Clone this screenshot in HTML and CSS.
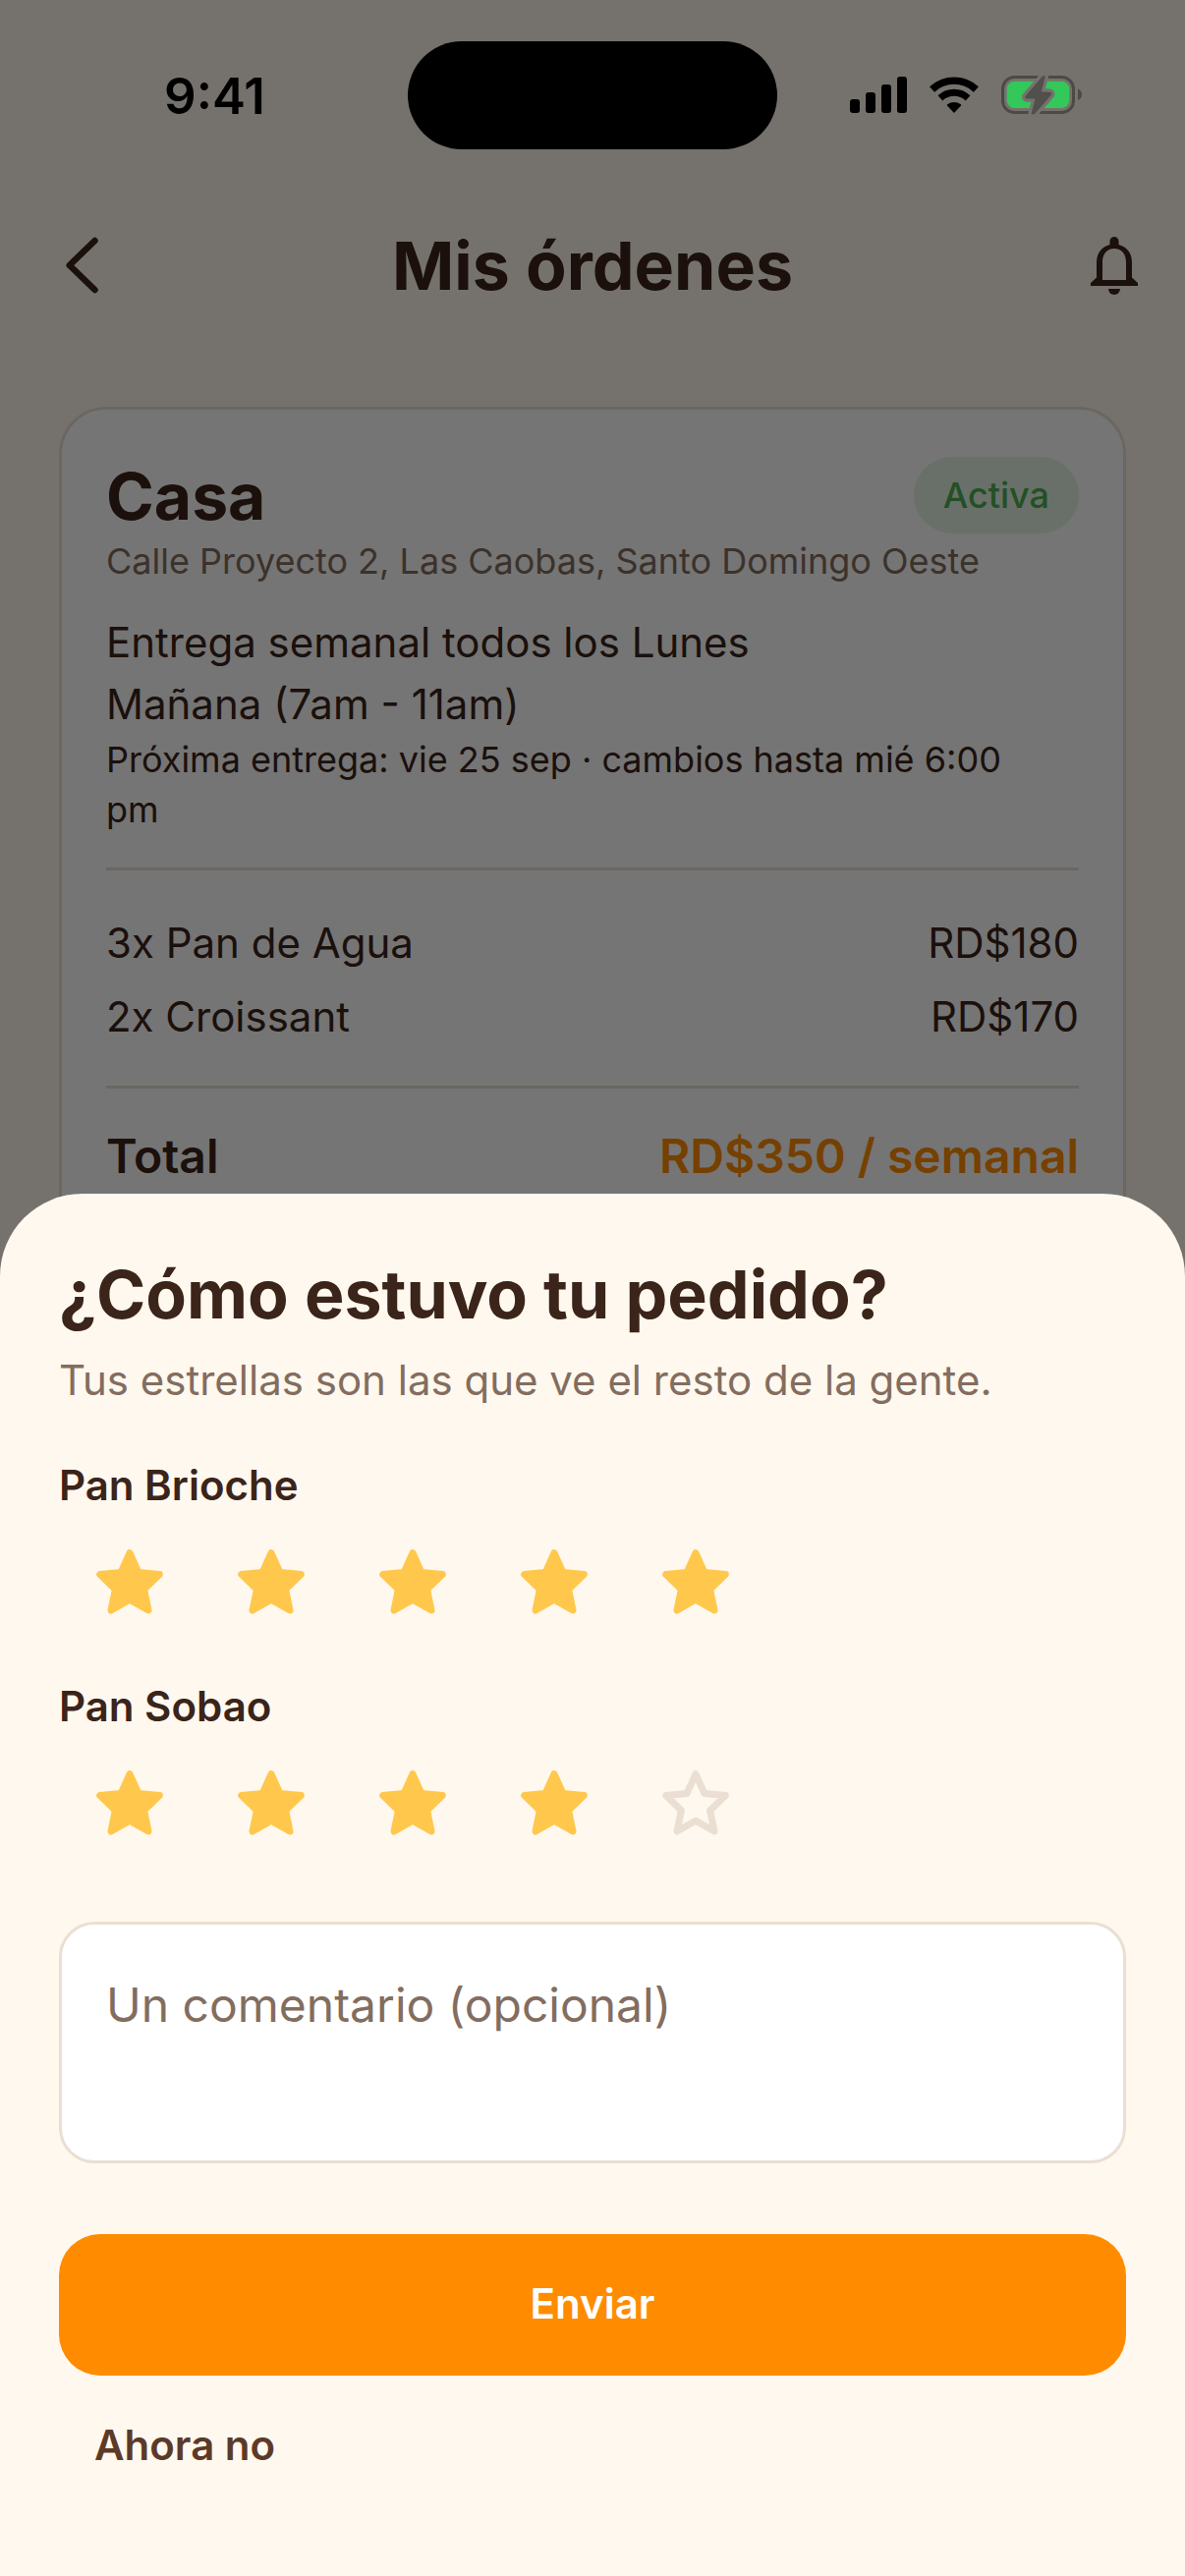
FILE: index.html
```html
<!DOCTYPE html>
<html lang="es">
<head>
    <meta charset="UTF-8">
    <meta name="viewport" content="width=device-width, initial-scale=1.0">
    <title>Mis órdenes</title>
    <link rel="stylesheet" href="styles.css">
</head>
<body>
    <!-- Shared icons -->
    <svg class="icon-defs" aria-hidden="true">
        <symbol id="star" viewBox="0 0 84 84">
            <path d="M42 8.6 51 28.6 72.3 30.6 56.6 45.7 61 67 42 56.2 23 67 27.4 45.7 11.7 30.6 33 28.6Z" stroke-width="7" stroke-linejoin="round"/>
        </symbol>
    </svg>

    <div class="status-bar">
        <div class="status-time">9:41</div>
        <div class="island"></div>
        <div class="status-icons">
            <svg width="58" height="40" viewBox="0 0 58 40">
                <rect x="0" y="24" width="10" height="14" rx="3"/>
                <rect x="16" y="17" width="10" height="21" rx="3"/>
                <rect x="32" y="9" width="10" height="29" rx="3"/>
                <rect x="48" y="1" width="10" height="37" rx="3"/>
            </svg>
            <svg width="50" height="40" viewBox="0 0 50 40">
                <path d="M2.6 14A32.8 32.8 0 0 1 47.4 14" fill="none" stroke="#000" stroke-width="7.4"/>
                <path d="M10.9 22.9A20.7 20.7 0 0 1 39.1 22.9" fill="none" stroke="#000" stroke-width="7"/>
                <path d="M25 38 18 30.5Q17.5 29.8 18.2 29.2A11.5 11.5 0 0 1 31.8 29.2Q32.5 29.8 32 30.5Z"/>
            </svg>
            <svg width="82" height="40" viewBox="0 0 82 40">
                <rect x="1.5" y="1.5" width="72" height="36" rx="12" fill="none" stroke="#4c4a46" stroke-width="3"/>
                <rect x="5.7" y="5.7" width="63.6" height="27.3" rx="8" fill="#34c759"/>
                <path d="M78 13.5Q82 15 82 19.2T78 25Z" fill="#4c4a46"/>
                <path d="M42.5 1 25 21.5 25.5 22.7 35.5 22.7 31.5 38.5 33.5 38.5 50.5 19 50 17.5 39.8 17 44 1Z" fill="#75726d" stroke="#75726d" stroke-width="8" stroke-linejoin="round"/>
                <path d="M42.5 1 25 21.5 25.5 22.7 35.5 22.7 31.5 38.5 33.5 38.5 50.5 19 50 17.5 39.8 17 44 1Z" fill="#52504c" stroke="#52504c" stroke-width="1.5" stroke-linejoin="round"/>
            </svg>
        </div>
    </div>

    <main class="screen">
        <header class="app-bar">
            <button type="button" class="icon-button back" aria-label="Volver">
                <svg width="72" height="72" viewBox="0 0 72 72">
                    <path d="M48.5 11 22.7 36 48.5 61" fill="none" stroke="#3b241a" stroke-width="6.5" stroke-linecap="round" stroke-linejoin="round"/>
                </svg>
            </button>
            <h1>Mis órdenes</h1>
            <button type="button" class="icon-button bell" aria-label="Notificaciones">
                <svg width="72" height="72" viewBox="0 0 72 72" fill="#3b241a">
                    <path fill-rule="evenodd" d="M12 57V54L18 48.5V33C18 24 22.5 17.5 31.5 15V11.5a4.5 4.5 0 0 1 9 0V15C49.5 17.5 54 24 54 33V48.5L60 54V57ZM24 51H48V33C48 24 43 19 36 19S24 24 24 33Z"/>
                    <path d="M30 60h12a6 6 0 0 1-12 0z"/>
                </svg>
            </button>
        </header>

        <section class="order-card">
            <div class="order-header">
                <h2>Casa</h2>
                <span class="chip">Activa</span>
            </div>
            <p class="address">Calle Proyecto 2, Las Caobas, Santo Domingo Oeste</p>
            <p class="schedule">Entrega semanal todos los Lunes<br>Mañana (7am - 11am)</p>
            <p class="next-delivery">Próxima entrega: vie 25 sep · cambios hasta mié 6:00<br>pm</p>
            <hr>
            <ul class="items">
                <li><span>3x Pan de Agua</span><span>RD$180</span></li>
                <li><span>2x Croissant</span><span>RD$170</span></li>
            </ul>
            <hr>
            <div class="total">
                <span>Total</span>
                <span class="total-price">RD$350 / semanal</span>
            </div>
        </section>
    </main>

    <div class="overlay"></div>

    <form class="sheet">
        <h2>¿Cómo estuvo tu pedido?</h2>
        <p class="subtitle">Tus estrellas son las que ve el resto de la gente.</p>

        <div class="rating">
            <h3>Pan Brioche</h3>
            <div class="stars">
                <button type="button" class="star filled" aria-label="1 estrella"><svg><use href="#star"/></svg></button>
                <button type="button" class="star filled" aria-label="2 estrellas"><svg><use href="#star"/></svg></button>
                <button type="button" class="star filled" aria-label="3 estrellas"><svg><use href="#star"/></svg></button>
                <button type="button" class="star filled" aria-label="4 estrellas"><svg><use href="#star"/></svg></button>
                <button type="button" class="star filled" aria-label="5 estrellas"><svg><use href="#star"/></svg></button>
            </div>
        </div>

        <div class="rating">
            <h3>Pan Sobao</h3>
            <div class="stars">
                <button type="button" class="star filled" aria-label="1 estrella"><svg><use href="#star"/></svg></button>
                <button type="button" class="star filled" aria-label="2 estrellas"><svg><use href="#star"/></svg></button>
                <button type="button" class="star filled" aria-label="3 estrellas"><svg><use href="#star"/></svg></button>
                <button type="button" class="star filled" aria-label="4 estrellas"><svg><use href="#star"/></svg></button>
                <button type="button" class="star" aria-label="5 estrellas"><svg><use href="#star"/></svg></button>
            </div>
        </div>

        <textarea name="comment" rows="2" aria-label="Comentario" placeholder="Un comentario (opcional)"></textarea>
        <button type="submit" class="submit">Enviar</button>
        <button type="button" class="dismiss">Ahora no</button>
    </form>
</body>
</html>
```
FILE: styles.css
```css
* {
    box-sizing: border-box;
    margin: 0;
    padding: 0;
}
body {
    font-family: Inter, "Liberation Sans", sans-serif;
    font-size: 42px;
    line-height: 63px;
    color: #3b241a;
    background-color: #fff8ee;
    min-height: 100vh;
    overflow: hidden;
}
button, textarea {
    font-family: inherit;
}
button {
    background: none;
    border: none;
    cursor: pointer;
}
svg {
    display: block;
}
.icon-defs {
    display: none;
}
h1, h2 {
    font-size: 68px;
    line-height: 84px;
    font-weight: 700;
}

/* Status bar, stays above the overlay */
.status-bar {
    position: relative;
    z-index: 3;
    display: grid;
    grid-template-columns: 1fr 376px 1fr;
    align-items: center;
    padding: 42px 0 34px;
    color: #000;
}
.status-time {
    padding-left: 22px;
    text-align: center;
    font-size: 51px;
    font-weight: 600;
}
.island {
    height: 110px;
    border-radius: 55px;
    background-color: #000;
}
.status-icons {
    display: flex;
    justify-content: center;
    gap: 23px;
    padding-right: 32px;
}

/* App bar */
.app-bar {
    display: grid;
    grid-template-columns: 168px 1fr 168px;
    align-items: center;
    height: 168px;
    text-align: center;
}
.icon-button {
    display: flex;
    align-items: center;
    justify-content: center;
    height: 144px;
}
.icon-button.bell {
    width: 144px;
    justify-self: end;
}

/* Order card */
.order-card {
    margin: 60px;
    padding: 48px 45px;
    background-color: #fff;
    border: 3px solid #eadfd2;
    border-radius: 48px;
}
.order-header {
    display: flex;
    justify-content: space-between;
    align-items: flex-start;
}
.order-header h2 {
    font-size: 66px;
    line-height: 81px;
}
.chip {
    padding: 12px 30px;
    border-radius: 39px;
    background-color: rgba(76, 175, 80, 0.15);
    color: #4caf50;
    font-size: 36px;
    line-height: 54px;
    font-weight: 500;
}
.address, .next-delivery {
    font-size: 36px;
    line-height: 51px;
}
.address {
    margin-bottom: 25px;
    color: #836d5f;
}
hr {
    height: 3px;
    margin: 33px 0;
    border: none;
    background-color: #eadfd2;
}
.items {
    display: flex;
    flex-direction: column;
    gap: 12px;
    padding: 9px 0 6px;
    list-style: none;
}
.items li, .total {
    display: flex;
    justify-content: space-between;
}
.total {
    font-size: 48px;
    line-height: 72px;
    font-weight: 600;
}
.total-price {
    color: #ff8c00;
}

/* Bottom sheet */
.overlay {
    position: fixed;
    inset: 0;
    z-index: 1;
    background-color: rgba(0, 0, 0, 0.54);
}
.sheet {
    position: fixed;
    left: 0;
    right: 0;
    bottom: 0;
    z-index: 2;
    padding: 60px;
    background-color: #fff8ee;
    border-radius: 84px 84px 0 0;
}
.subtitle {
    margin: 14px 0 46px;
    color: #836d5f;
}
.rating {
    margin-bottom: 21px;
}
.rating h3 {
    font-size: 42px;
    line-height: 60px;
    font-weight: 600;
}
.stars {
    display: flex;
}
.star {
    display: flex;
    align-items: center;
    justify-content: center;
    width: 144px;
    height: 144px;
    fill: none;
    stroke: #eadfd2;
}
.star.filled {
    fill: #ffc84d;
    stroke: #ffc84d;
}
.star svg {
    width: 84px;
    height: 84px;
}
textarea {
    display: block;
    width: 100%;
    height: 246px;
    margin-top: 45px;
    padding: 46px 45px;
    border: 3px solid #eadfd2;
    border-radius: 36px;
    background-color: #fff;
    color: #3b241a;
    font-size: 48px;
    line-height: 72px;
    resize: none;
}
textarea::placeholder {
    color: #836d5f;
}
.submit, .dismiss {
    display: block;
    height: 144px;
    padding: 0 36px 3px;
    font-size: 42px;
    font-weight: 600;
}
.submit {
    width: 100%;
    margin-top: 72px;
    border-radius: 42px;
    background-color: #ff8c00;
    color: #fff;
}
.dismiss {
    color: #5c3a28;
}
```
